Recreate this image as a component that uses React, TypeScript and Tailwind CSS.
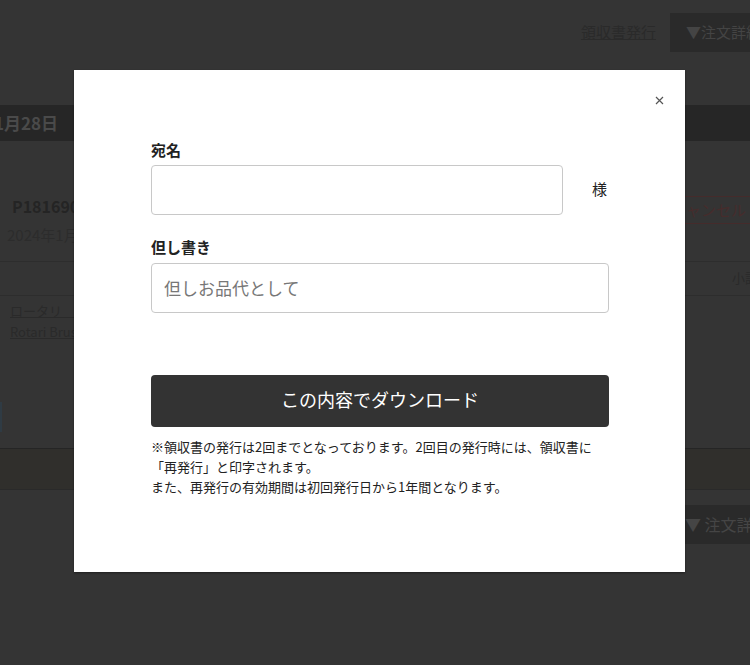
import React from "react";

const FONT = {
  fontFamily:
    '"Noto Sans CJK JP", "Noto Sans", "Liberation Sans", sans-serif',
};

// Page behind the dimmed overlay (colours already dimmed)
const BackgroundPage: React.FC = () => (
  <div className="w-[750px] h-[665px] overflow-hidden bg-[#343434] text-[#2a2a2a]">
    <div className="flex justify-end items-center gap-[14px] pt-[13px] h-[52px]">
      <span className="text-[15px] underline">領収書発行</span>
      <div className="w-[80px] h-[39px] bg-[#2a2a2a] text-[#444] text-[15px] flex items-center pl-[16px] whitespace-nowrap overflow-hidden">
        ▼注文詳細
      </div>
    </div>

    <div className="mt-[53px] h-[36px] bg-[#262626] flex items-center text-[17px] font-bold text-[#4a4a4a] -ml-[6px]">
      1月28日
    </div>

    <div className="flex justify-between mt-[53px]">
      <div className="pl-[12px]">
        <div className="text-[16px] font-bold text-[#242424]">P18169000</div>
        <div className="text-[15px] text-[#2c2c2c] -ml-[5px] mt-[6px]">2024年1月</div>
      </div>
      <div className="mt-[2px] w-[66px] h-[28px] border border-[#452b2b] border-r-0 text-[#462c2c] text-[15px] whitespace-nowrap overflow-hidden pl-[1px] flex items-center">
        ャンセル
      </div>
    </div>

    <div className="mt-[14px] border-t border-[#2d2d2d] h-[34px] flex justify-end items-center text-[13px] text-[#2a2a2a]">
      <span className="-mr-[8px]">小計</span>
    </div>
    <div className="border-t border-[#2d2d2d] pl-[10px] pt-[4px] text-[13px] leading-[21px] text-[#2a2a2a]">
      <div className="underline">ロータリ　</div>
      <div className="underline">Rotari Brush</div>
    </div>

    <div className="mt-[60px] w-[2px] h-[30px] bg-[#2f3b44]" />

    <div className="mt-[16px] border-t border-[#252525] h-[42px] bg-[#302f2c] border-b border-b-[#2a2a2a]" />

    <div className="mt-[15px] flex justify-end">
      <div className="w-[67px] h-[39px] bg-[#2a2a2a] text-[#454545] text-[16px] flex items-center whitespace-nowrap overflow-hidden pl-[2px]">
        ▼ 注文詳細
      </div>
    </div>
  </div>
);

export default function App() {
  return (
    <div className="relative w-[750px] h-[665px] overflow-hidden" style={FONT}>
      <BackgroundPage />

      {/* Modal */}
      <div className="absolute left-[74px] top-[70px] w-[611px] h-[502px] bg-white shadow-[0_1px_2px_rgba(0,0,0,0.4)] px-[77px] pt-[70px] text-[#222]">
        <button className="absolute right-[18px] top-[22px] w-[16px] h-[16px] flex items-center justify-center">
          <svg width="9" height="9" viewBox="0 0 9 9">
            <path d="M1 1L8 8M8 1L1 8" stroke="#555" strokeWidth="1.2" />
          </svg>
        </button>

        <div className="text-[15px] font-bold leading-[20px]">宛名</div>
        <div className="flex items-center mt-[5px]">
          <div className="w-[412px] h-[50px] rounded-[4px] border border-[#c8c8c8]" />
          <span className="ml-[29px] text-[15px] -mt-[2px]">様</span>
        </div>

        <div className="mt-[22px] text-[15px] font-bold leading-[20px]">但し書き</div>
        <div className="mt-[6px] w-[458px] h-[50px] rounded-[4px] border border-[#c8c8c8] flex items-center pl-[12px] text-[17px] text-[#777]">
          但しお品代として
        </div>

        <button className="mt-[62px] w-[458px] h-[52px] rounded-[4px] bg-[#333] text-white text-[18px] leading-[24px] flex items-center justify-center pb-[4px]">
          この内容でダウンロード
        </button>

        <p className="mt-[10px] text-[13px] leading-[20px] text-[#222] whitespace-nowrap">
          ※領収書の発行は2回までとなっております。2回目の発行時には、領収書に
          <br />
          「再発行」と印字されます。
          <br />
          また、再発行の有効期間は初回発行日から1年間となります。
        </p>
      </div>
    </div>
  );
}
